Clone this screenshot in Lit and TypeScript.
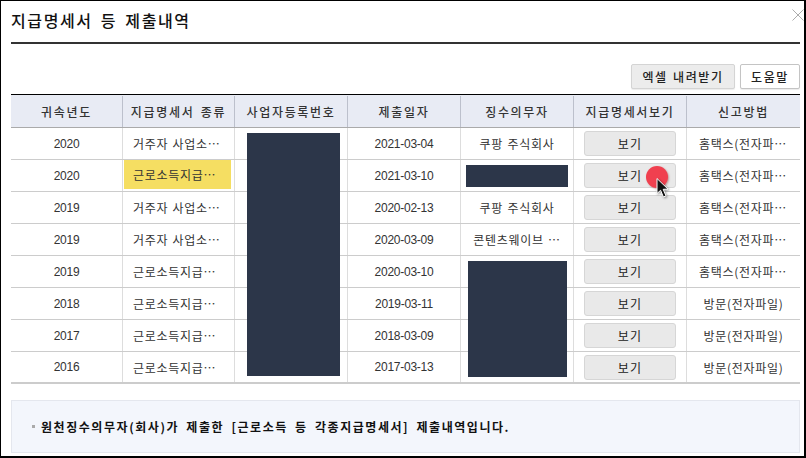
import { LitElement, html, css } from "lit";
import { customElement } from "lit/decorators.js";

const rows = [
  ["2020", "거주자 사업소…", "2021-03-04", "쿠팡 주식회사", "홈택스(전자파…"],
  ["2020", "근로소득지급…", "2021-03-10", "", "홈택스(전자파…"],
  ["2019", "거주자 사업소…", "2020-02-13", "쿠팡 주식회사", "홈택스(전자파…"],
  ["2019", "거주자 사업소…", "2020-03-09", "콘텐츠웨이브 …", "홈택스(전자파…"],
  ["2019", "근로소득지급…", "2020-03-10", "", "홈택스(전자파…"],
  ["2018", "근로소득지급…", "2019-03-11", "", "방문(전자파일)"],
  ["2017", "근로소득지급…", "2018-03-09", "", "방문(전자파일)"],
  ["2016", "근로소득지급…", "2017-03-13", "", "방문(전자파일)"],
];
const heads = ["귀속년도", "지급명세서 종류", "사업자등록번호", "제출일자", "징수의무자", "지급명세서보기", "신고방법"];

@customElement("app-root")
export class AppRoot extends LitElement {
  static styles = css`
    :host { display: block; width: 806px; height: 458px; background: #fff; font-family: "Noto Sans CJK KR", "Noto Sans", sans-serif; color: #222; }
    .dialog { box-sizing: border-box; width: 806px; height: 458px; position: relative; background: #fff; border: 1px solid #000; border-right-width: 2px; border-bottom-width: 2px; padding: 0 4px 0 10px; display: flex; flex-direction: column; }
    .title { height: 41px; flex: none; box-sizing: border-box; font-size: 16px; font-weight: 500; color: #111; line-height: 38px; letter-spacing: 1.6px; word-spacing: 3px; }
    .rule { height: 2px; background: #333; flex: none; }
    .close { position: absolute; top: 8px; right: 0; width: 12px; height: 12px; }
    .tools { height: 50px; flex: none; box-sizing: border-box; display: flex; justify-content: flex-end; align-items: flex-end; gap: 5px; padding-bottom: 5px; }
    .tool { box-sizing: border-box; height: 25px; font-size: 12px; font-weight: 500; letter-spacing: 1.6px; word-spacing: 1px; display: flex; align-items: center; justify-content: center; border-radius: 2px; border: 1px solid #d4d4d4; color: #222; box-shadow: 0 1px 1px rgba(0,0,0,.08); }
    .excel { width: 104px; background: #ececec; }
    .help { width: 60px; background: #fff; border-color: #c4c4c4; }
    .table { position: relative; border-top: 1px solid #000; }
    .row { display: grid; grid-template-columns: 112px 112px 113px 113px 113px 113px 113px; height: 32px; box-sizing: border-box; border-bottom: 1px solid #ccc; }
    .row.head { height: 33px; background: #e8ebf4; border-bottom: 1px solid #aaa; border-top: 1px solid #e8ebf4; }
    .row.last { border-bottom: 2px solid #ccc; }
    .cell { display: flex; align-items: center; justify-content: center; font-size: 12px; color: #333; border-right: 1px solid #ddd; letter-spacing: 0.7px; word-spacing: 1px; white-space: nowrap; min-width: 0; }
    .cell:last-child { border-right: 0; }
    .head .cell { font-weight: 500; color: #333; letter-spacing: 1.7px; word-spacing: 2px; border-right: 1px solid #bcc0cc; }
    .head .cell:last-child { border-right: 0; }
    .num { font-family: "Liberation Sans", sans-serif; letter-spacing: -0.25px; }
    .kind { justify-content: flex-start; padding-left: 10px; }
    .kind.marked { padding-left: 1px; align-items: flex-start; }
    .hl { box-sizing: border-box; width: 107px; height: 29px; padding-left: 9px; background: #f5de62; display: flex; align-items: center; }
    .method { justify-content: flex-start; padding-left: 12px; }
    .method.center { justify-content: center; padding-left: 0; }
    .view { box-sizing: border-box; width: 92px; height: 25px; background: #e9e9e9; border: 1px solid #d6d6d6; border-radius: 3px; font-size: 12px; font-weight: 400; color: #222; letter-spacing: 1.2px; display: flex; align-items: center; justify-content: center; }
    .mask { position: absolute; background: #2c3649; }
    .m1 { left: 236px; top: 38px; width: 93px; height: 243px; }
    .m2 { left: 455px; top: 70px; width: 102px; height: 22px; }
    .m3 { left: 457px; top: 166px; width: 99px; height: 116px; }
    .dot { position: absolute; left: 635px; top: 71px; width: 22px; height: 22px; border-radius: 50%; background: #f0404f; box-shadow: 1px 1px 2px rgba(120,0,0,.35); }
    .cursor { position: absolute; left: 645px; top: 82px; width: 14px; height: 22px; filter: drop-shadow(1px 1px 1px rgba(0,0,0,.4)); }
    .note { margin-top: 16px; box-sizing: border-box; height: 53px; background: #f3f6fc; border: 1px solid #e4e7ee; display: flex; align-items: center; padding-left: 20px; gap: 6px; font-size: 12px; font-weight: 700; color: #111; letter-spacing: 1.55px; word-spacing: 3px; }
    .sq { width: 3px; height: 3px; background: #aaa; flex: none; }
  `;

  render() {
    return html`<div class="dialog">
      <div class="title">지급명세서 등 제출내역</div>
      <div class="rule"></div>
      <svg class="close" viewBox="0 0 12 12" fill="none" stroke="#888" stroke-width="0.7"><path d="M0.5 0.5 L11.5 11.5 M11.5 0.5 L0.5 11.5" /></svg>
      <div class="tools">
        <div class="tool excel">엑셀 내려받기</div>
        <div class="tool help">도움말</div>
      </div>
      <div class="table">
        <div class="row head">${heads.map((h) => html`<div class="cell">${h}</div>`)}</div>
        ${rows.map((r, i) => html`<div class="row ${i === rows.length - 1 ? "last" : ""}">
          <div class="cell num">${r[0]}</div>
          ${i === 1
            ? html`<div class="cell kind marked"><div class="hl">${r[1]}</div></div>`
            : html`<div class="cell kind">${r[1]}</div>`}
          <div class="cell"></div>
          <div class="cell num">${r[2]}</div>
          <div class="cell">${r[3]}</div>
          <div class="cell"><div class="view">보기</div></div>
          <div class="cell method ${i >= 5 ? "center" : ""}">${r[4]}</div>
        </div>`)}
        <div class="mask m1"></div>
        <div class="mask m2"></div>
        <div class="mask m3"></div>
        <div class="dot"></div>
        <svg class="cursor" viewBox="0 0 14 21"><path d="M1 1 L1 16 L4.6 12.8 L7.4 19.5 L10 18.4 L7.2 11.8 L12 11.6 Z" fill="#111" stroke="#fff" stroke-width="1" /></svg>
      </div>
      <div class="note"><span class="sq"></span><span>원천징수의무자(회사)가 제출한 [근로소득 등 각종지급명세서] 제출내역입니다.</span></div>
    </div>`;
  }
}
